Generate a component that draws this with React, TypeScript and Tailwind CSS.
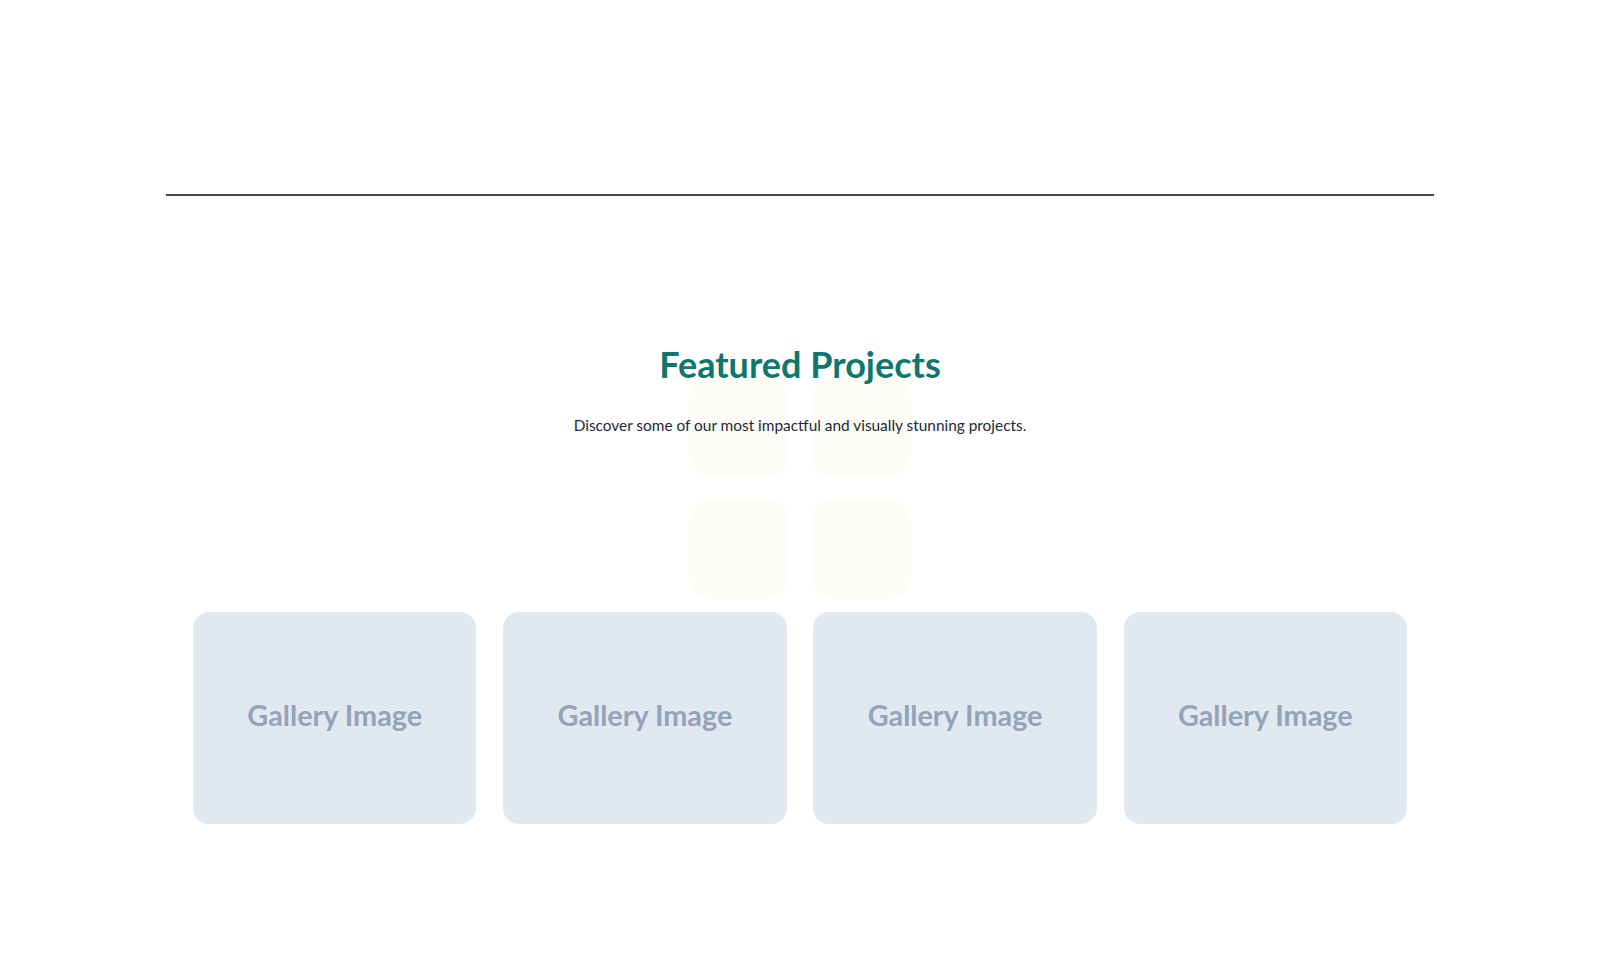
import React from "react";

const cards = ["Gallery Image", "Gallery Image", "Gallery Image", "Gallery Image"];

export default function App() {
  return (
    <div className="min-h-screen w-full bg-white pt-[194px] pb-[150px]">
      <div className="mx-auto w-[1268px]">
        <div className="h-[2px] bg-[#474747]" />
        <section className="relative pt-[148px]">
          <div className="pointer-events-none absolute left-1/2 top-[181px] z-0 grid -translate-x-1/2 grid-cols-2 gap-[22px]">
            <div className="h-[100px] w-[100px] rounded-[24px] bg-[#fdfcf6]" />
            <div className="h-[100px] w-[100px] rounded-[24px] bg-[#fdfcf6]" />
            <div className="h-[100px] w-[100px] rounded-[24px] bg-[#fdfcf6]" />
            <div className="h-[100px] w-[100px] rounded-[24px] bg-[#fdfcf6]" />
          </div>
          <div className="relative z-10 text-center">
            <h2 className="font-['Lato',sans-serif] text-[36px] font-bold leading-[40px] text-[#0f766e]">
              Featured Projects
            </h2>
            <p className="mt-[29px] font-['Lato',sans-serif] text-[15.4px] leading-[24px] text-[#1e293b]">
              Discover some of our most impactful and visually stunning projects.
            </p>
          </div>
          <div className="relative z-10 mt-[175px] grid grid-cols-4 gap-[26.7px] px-[27px]">
            {cards.map((c, i) => (
              <div
                key={i}
                className="flex h-[212px] items-center justify-center rounded-2xl bg-[#e2e8f0] pb-[5px]"
              >
                <span className="font-['Lato',sans-serif] text-[28.8px] font-bold text-[#94a3b8]">{c}</span>
              </div>
            ))}
          </div>
        </section>
      </div>
    </div>
  );
}
